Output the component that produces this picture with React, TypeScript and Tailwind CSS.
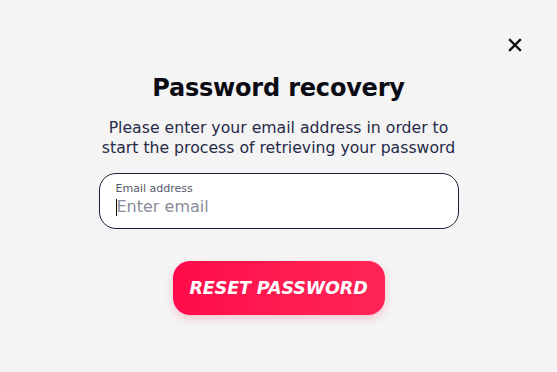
import React from "react";

const App: React.FC = () => {
  return (
    <div
      className="relative w-[557px] h-[372px] bg-[#f4f4f4] flex flex-col items-center"
      style={{ fontFamily: '"DejaVu Sans", sans-serif' }}
    >
      <button className="absolute right-[34px] top-[37px] text-[#111]">
        <svg width="16" height="16" viewBox="0 0 16 16">
          <path d="M3 3 L13 13 M13 3 L3 13" stroke="currentColor" strokeWidth="2.4" strokeLinecap="square" />
        </svg>
      </button>
      <h1 className="mt-[71px] text-[24px] leading-[34px] font-bold text-[#0b0b14] tracking-[-0.2px]">
        Password recovery
      </h1>
      <p className="mt-[13px] text-[15.7px] leading-[20px] text-[#262a48] text-center">
        Please enter your email address in order to
        <br />
        start the process of retrieving your password
      </p>
      <div className="mt-[15px] w-[360px] h-[56px] rounded-[17px] border border-[#1c1e38] bg-white px-[16px] pt-[8px]">
        <div className="text-[11px] leading-[14px] text-[#55586a]">Email address</div>
        <div className="flex items-center h-[22px]">
          <span className="w-px h-[17px] bg-[#111]" />
          <span className="text-[16px] text-[#8a8c98]">Enter email</span>
        </div>
      </div>
      <button className="mt-[32px] w-[212px] h-[54px] rounded-[17px] bg-gradient-to-r from-[#ff0a4a] to-[#ff2456] text-white text-[17.5px] font-extrabold italic tracking-[-0.1px] shadow-[0_4px_8px_rgba(255,20,80,0.2)]">
        RESET PASSWORD
      </button>
    </div>
  );
};

export default App;
